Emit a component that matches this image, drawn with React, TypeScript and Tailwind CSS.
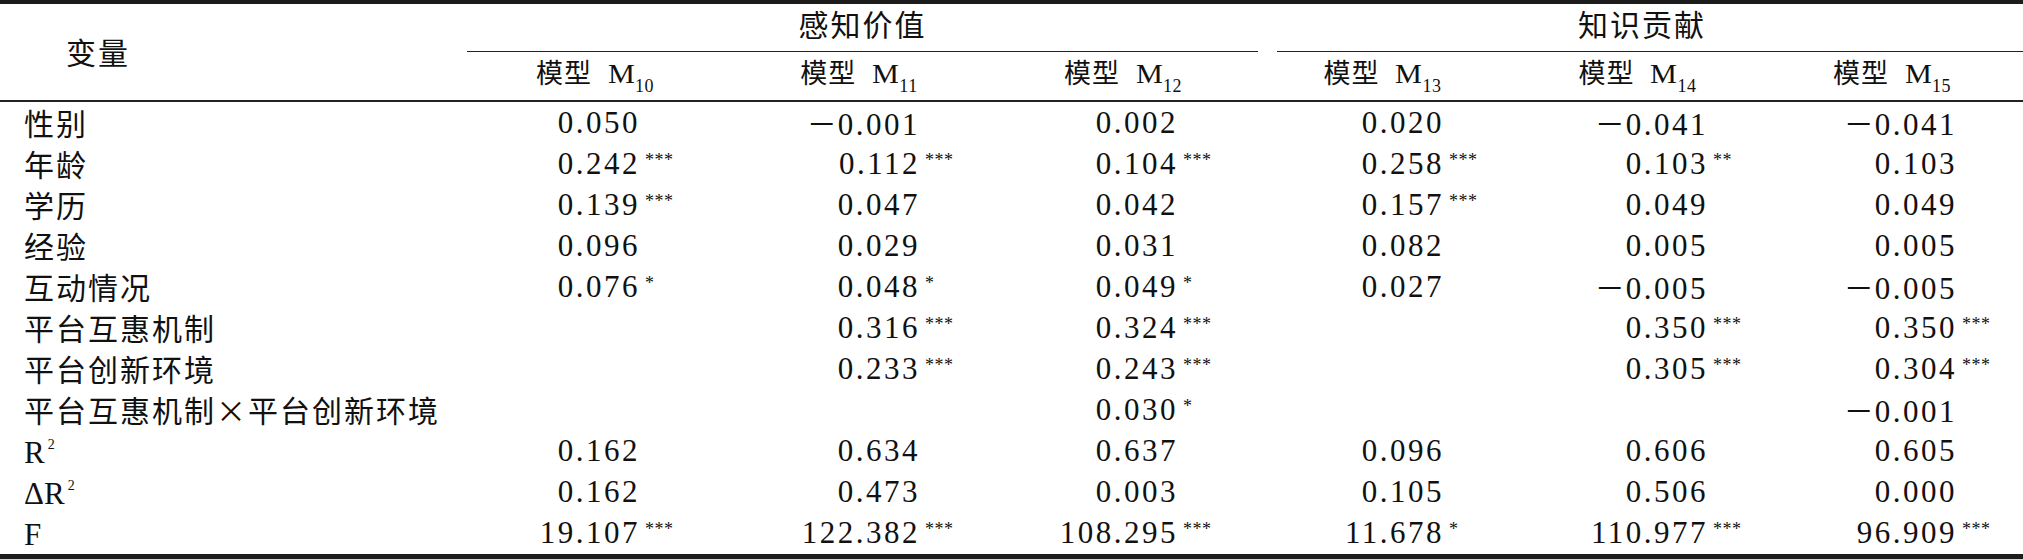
import React from 'react';

const serif = 'font-[family-name:Liberation_Serif,serif]';
const cjk = 'font-[family-name:Noto_Sans_CJK_SC,sans-serif]';

const colW = ['w-[264px]', 'w-[264px]', 'w-[264px]', 'w-[255px]', 'w-[255px]', 'flex-1'];
// right edge of the digits inside each column
const numW = ['w-[173px]', 'w-[189px]', 'w-[183px]', 'w-[185px]', 'w-[194px]', 'w-[188px]'];

type Row = { label: React.ReactNode; values: string[] };

const sq = <span className="text-[14px] leading-none align-[14px] ml-[3px]">2</span>;

const rows: Row[] = [
  { label: '性别', values: ['0.050', '-0.001', '0.002', '0.020', '-0.041', '-0.041'] },
  { label: '年龄', values: ['0.242***', '0.112***', '0.104***', '0.258***', '0.103**', '0.103'] },
  { label: '学历', values: ['0.139***', '0.047', '0.042', '0.157***', '0.049', '0.049'] },
  { label: '经验', values: ['0.096', '0.029', '0.031', '0.082', '0.005', '0.005'] },
  { label: '互动情况', values: ['0.076*', '0.048*', '0.049*', '0.027', '-0.005', '-0.005'] },
  { label: '平台互惠机制', values: ['', '0.316***', '0.324***', '', '0.350***', '0.350***'] },
  { label: '平台创新环境', values: ['', '0.233***', '0.243***', '', '0.305***', '0.304***'] },
  { label: '平台互惠机制×平台创新环境', values: ['', '', '0.030*', '', '', '-0.001'] },
  {
    label: <span className={`${serif} text-[31px] tracking-normal`}>R{sq}</span>,
    values: ['0.162', '0.634', '0.637', '0.096', '0.606', '0.605'],
  },
  {
    label: <span className={`${serif} text-[31px] tracking-normal`}>ΔR{sq}</span>,
    values: ['0.162', '0.473', '0.003', '0.105', '0.506', '0.000'],
  },
  {
    label: <span className={`${serif} text-[31px] tracking-normal`}>F</span>,
    values: ['19.107***', '122.382***', '108.295***', '11.678*', '110.977***', '96.909***'],
  },
];

function Num({ text, w }: { text: string; w: string }) {
  if (!text) return null;
  const m = text.match(/^(-?)([\d.]+)(\**)$/);
  if (!m) return null;
  const [, neg, num, stars] = m;
  return (
    <div className="flex items-start">
      <div className={`${w} shrink-0 text-right leading-[41px] text-[31px] tracking-[2.5px] ${serif}`}>
        {neg && <span className={`${cjk} text-[30px] tracking-normal mr-[1px]`}>－</span>}
        {num}
      </div>
      {stars && (
        <span className={`${serif} ml-[5px] mt-[8px] text-[18px] leading-none tracking-[0.5px]`}>{stars}</span>
      )}
    </div>
  );
}

function ModelHead({ n }: { n: string }) {
  return (
    <div className="pt-[6px] pr-[8px] text-center leading-none whitespace-nowrap">
      <span className={`${cjk} text-[27px] tracking-[1px]`}>模型</span>
      <span className={`${serif} inline-block text-[27px] ml-[16px] mr-[3px] scale-x-[1.12] origin-left`}>M</span>
      <span className={`${serif} text-[18px] align-[-9px] tracking-[0.5px]`}>{n}</span>
    </div>
  );
}

export default function App() {
  return (
    <div className="w-[2023px] h-[559px] bg-white text-[#111] overflow-hidden">
      <div className="h-[4px] bg-[#1c1c1c]" />

      <div className="flex h-[96px]">
        <div className="w-[467px] shrink-0 flex items-center pl-[66px] pb-[2px]">
          <span className={`${cjk} text-[30px] tracking-[2px]`}>变量</span>
        </div>
        <div className="flex-1 flex flex-col">
          <div className="flex h-[48px]">
            <div className="w-[791px] flex items-center justify-center pb-[8px] border-b-[1.5px] border-[#222]">
              <span className={`${cjk} text-[30px] tracking-[2px]`}>感知价值</span>
            </div>
            <div className="flex-1 ml-[19px] flex items-center justify-center pb-[8px] border-b-[1.5px] border-[#222]">
              <span className={`${cjk} text-[30px] tracking-[2px] mr-[16px]`}>知识贡献</span>
            </div>
          </div>
          <div className="flex h-[48px]">
            {['10', '11', '12', '13', '14', '15'].map((n, i) => (
              <div key={n} className={`${colW[i]} shrink-0`}>
                <ModelHead n={n} />
              </div>
            ))}
          </div>
        </div>
      </div>
      <div className="h-[1.5px] bg-[#222]" />

      {rows.map((r, ri) => (
        <div key={ri} className="flex h-[41.1px]">
          <div className={`w-[467px] shrink-0 pl-[24px] leading-[41px] text-[30px] tracking-[2px] whitespace-nowrap ${cjk}`}>
            {r.label}
          </div>
          {r.values.map((v, ci) => (
            <div key={ci} className={`${colW[ci]} shrink-0`}>
              <Num text={v} w={numW[ci]} />
            </div>
          ))}
        </div>
      ))}

      <div className="h-[5px] bg-[#1c1c1c]" />
    </div>
  );
}
